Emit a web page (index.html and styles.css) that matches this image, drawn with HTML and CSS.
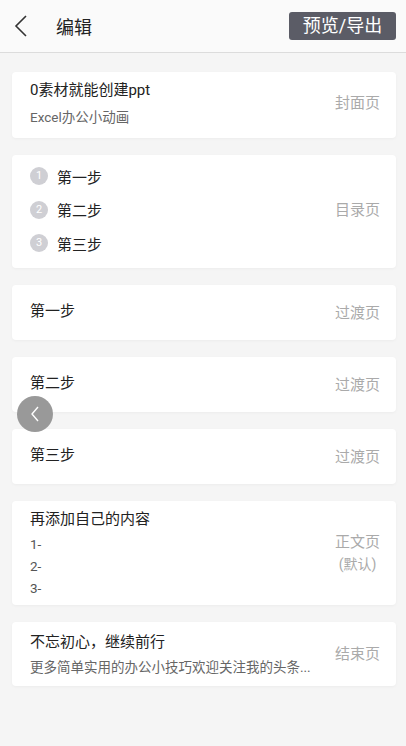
FILE: index.html
```html
<!DOCTYPE html>
<html lang="zh-CN">
<head>
  <meta charset="UTF-8">
  <title>编辑</title>
  <link rel="stylesheet" href="styles.css">
</head>
<body>
  <header class="topbar">
    <div class="topbar-left">
      <svg class="back-icon" width="14" height="22" viewBox="0 0 14 22">
        <path d="M12 1 L2 11 L12 21" fill="none" stroke="#333" stroke-width="1.6"/>
      </svg>
      <span class="topbar-title">编辑</span>
    </div>
    <a href="#" class="export-button">预览/导出</a>
  </header>

  <main class="page-list">
    <div class="page-card card-cover">
      <div class="card-body">
        <div class="card-title">0素材就能创建ppt</div>
        <div class="card-sub">Excel办公小动画</div>
      </div>
      <div class="card-type">封面页</div>
    </div>

    <div class="page-card card-toc">
      <div class="card-body">
        <div class="toc-row"><span class="toc-num">1</span>第一步</div>
        <div class="toc-row"><span class="toc-num">2</span>第二步</div>
        <div class="toc-row"><span class="toc-num">3</span>第三步</div>
      </div>
      <div class="card-type">目录页</div>
    </div>

    <div class="page-card card-step">
      <div class="card-body">
        <div class="card-title">第一步</div>
      </div>
      <div class="card-type">过渡页</div>
    </div>

    <div class="page-card card-step">
      <div class="card-body">
        <div class="card-title">第二步</div>
      </div>
      <div class="card-type">过渡页</div>
    </div>

    <div class="page-card card-step">
      <div class="card-body">
        <div class="card-title">第三步</div>
      </div>
      <div class="card-type">过渡页</div>
    </div>

    <div class="page-card card-content">
      <div class="card-body">
        <div class="card-title">再添加自己的内容</div>
        <div class="card-line">1-</div>
        <div class="card-line">2-</div>
        <div class="card-line">3-</div>
      </div>
      <div class="card-type">正文页<br><span class="card-type-note">(默认)</span></div>
    </div>

    <div class="page-card card-end">
      <div class="card-body">
        <div class="card-title">不忘初心，继续前行</div>
        <div class="card-sub">更多简单实用的办公小技巧欢迎关注我的头条...</div>
      </div>
      <div class="card-type">结束页</div>
    </div>
  </main>

  <div class="float-back">
    <svg width="10" height="16" viewBox="0 0 10 16">
      <path d="M8 1 L2 8 L8 15" fill="none" stroke="#fff" stroke-width="1.4"/>
    </svg>
  </div>
</body>
</html>
```

FILE: styles.css
```css
* {
  margin: 0;
  padding: 0;
  box-sizing: border-box;
}

body {
  font-family: Roboto, 'Noto Sans CJK SC', sans-serif;
  background-color: #f5f5f5;
  color: #222;
  width: 406px;
  height: 746px;
  overflow: hidden;
  position: relative;
}

.topbar {
  height: 53px;
  background-color: #fafafa;
  border-bottom: 1px solid #dcdcdc;
  display: flex;
  align-items: center;
  justify-content: space-between;
  padding: 0 10px 0 14px;
}

.topbar-left {
  display: flex;
  align-items: center;
}

.back-icon {
  display: block;
}

.topbar-title {
  font-size: 18px;
  margin-left: 28px;
  color: #222;
}

.export-button {
  width: 107px;
  height: 28px;
  margin-top: -1px;
  background-color: #5b5c66;
  border-radius: 3px;
  color: #fff;
  font-size: 18px;
  line-height: 28px;
  text-align: center;
  text-decoration: none;
}

.page-list {
  padding: 19px 10px 0 12px;
  display: flex;
  flex-direction: column;
  gap: 17px;
}

.page-card {
  background-color: #fff;
  border-radius: 4px;
  box-shadow: 0 1px 3px rgba(0, 0, 0, 0.04);
  display: flex;
  align-items: center;
  padding: 0 16px 0 18px;
}

.card-body {
  flex: 1;
  min-width: 0;
}

.card-title {
  font-size: 15px;
  line-height: 22px;
  color: #222;
}

.card-sub {
  font-size: 13.5px;
  line-height: 20px;
  color: #666;
  margin-top: 6px;
  white-space: nowrap;
}

.card-type {
  font-size: 15px;
  line-height: 22px;
  color: #aaa;
  text-align: center;
  margin-left: 12px;
  flex-shrink: 0;
}

.card-type-note {
  font-size: 14px;
}

.card-cover {
  height: 66px;
  padding-bottom: 4px;
}

.card-toc {
  height: 113px;
  padding-bottom: 4px;
}

.toc-row {
  display: flex;
  align-items: center;
  height: 33.5px;
  font-size: 15px;
}

.toc-num {
  width: 18px;
  height: 18px;
  border-radius: 50%;
  background-color: #cfcfd4;
  color: #fff;
  font-size: 11px;
  line-height: 18px;
  text-align: center;
  margin-right: 9px;
}

.card-step {
  height: 55px;
}

.card-step .card-title {
  margin-top: -4px;
}

.card-content {
  height: 104px;
}

.card-line {
  font-size: 13.5px;
  line-height: 22px;
  color: #555;
}

.card-title + .card-line {
  margin-top: 3px;
}

.card-end {
  height: 64px;
}

.card-end .card-sub {
  margin-top: 4px;
}

.float-back {
  position: absolute;
  left: 17px;
  top: 396px;
  width: 36px;
  height: 36px;
  border-radius: 50%;
  background-color: #999;
  display: flex;
  align-items: center;
  justify-content: center;
}
```
